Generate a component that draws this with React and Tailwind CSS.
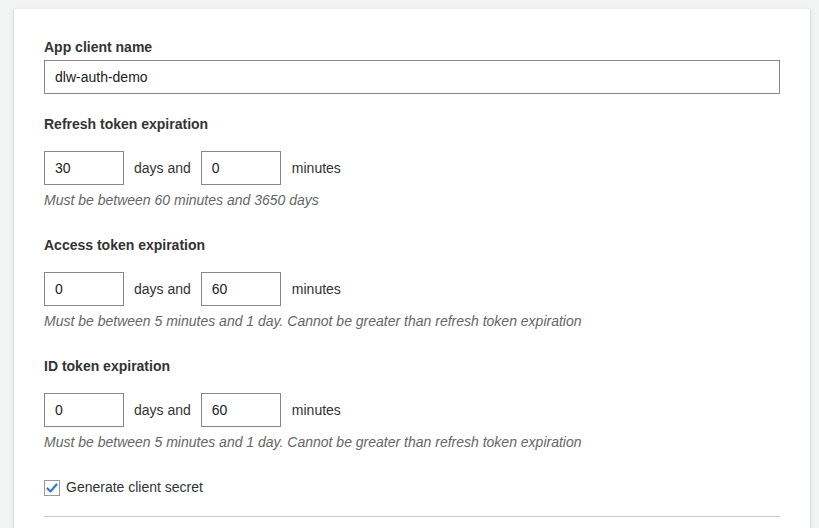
import React from "react";

const font = { fontFamily: '"Liberation Sans", Arial, Helvetica, sans-serif' };

function Label({ children, className = "" }) {
  return (
    <div className={"text-[14px] leading-[17px] font-bold text-[#333] " + className}>{children}</div>
  );
}

function SmallInput({ value }) {
  return (
    <input
      readOnly
      value={value}
      className="w-[80px] h-[34px] border border-[#888] bg-white pl-[10px] text-[14px] text-[#222] outline-none"
      style={font}
    />
  );
}

function TokenSection({ label, days, minutes, help, className = "" }) {
  return (
    <div className={className}>
      <Label>{label}</Label>
      <div className="mt-[18px] flex items-center">
        <SmallInput value={days} />
        <span className="mx-[10px] text-[14px] text-[#333]">days and</span>
        <SmallInput value={minutes} />
        <span className="ml-[11px] text-[14px] text-[#333]">minutes</span>
      </div>
      <div className="mt-[7px] text-[14px] leading-[16px] italic text-[#666]">{help}</div>
    </div>
  );
}

export default function App() {
  return (
    <div className="min-h-[528px] w-[819px] bg-[#f2f4f4] pt-[9px] pl-[14px] overflow-hidden" style={font}>
      <div className="w-[796px] h-[540px] bg-white shadow-[0_1px_3px_rgba(0,0,0,0.18)] pl-[30px] pr-[30px] pt-[30px]">
        <Label>App client name</Label>
        <input
          readOnly
          value="dlw-auth-demo"
          className="mt-[4px] block w-[736px] h-[34px] border border-[#888] bg-white pl-[10px] text-[14px] text-[#222] outline-none"
          style={font}
        />
        <TokenSection
          className="mt-[22px]"
          label="Refresh token expiration"
          days="30"
          minutes="0"
          help="Must be between 60 minutes and 3650 days"
        />
        <TokenSection
          className="mt-[29px]"
          label="Access token expiration"
          days="0"
          minutes="60"
          help="Must be between 5 minutes and 1 day. Cannot be greater than refresh token expiration"
        />
        <TokenSection
          className="mt-[29px]"
          label="ID token expiration"
          days="0"
          minutes="60"
          help="Must be between 5 minutes and 1 day. Cannot be greater than refresh token expiration"
        />
        <div className="mt-[27px] flex items-center">
          <span className="w-[16px] h-[16px] border border-[#999] bg-white flex items-center justify-center">
            <svg width="12" height="12" viewBox="0 0 12 12">
              <path d="M1.5 6.5 L4.5 9.5 L10.5 2.5" fill="none" stroke="#2e7fd2" strokeWidth="2.2" strokeLinecap="round" strokeLinejoin="round" />
            </svg>
          </span>
          <span className="ml-[6px] text-[14px] text-[#333]">Generate client secret</span>
        </div>
        <div className="mt-[18px] w-[736px] h-px bg-[#c8c8c8]" />
      </div>
    </div>
  );
}
